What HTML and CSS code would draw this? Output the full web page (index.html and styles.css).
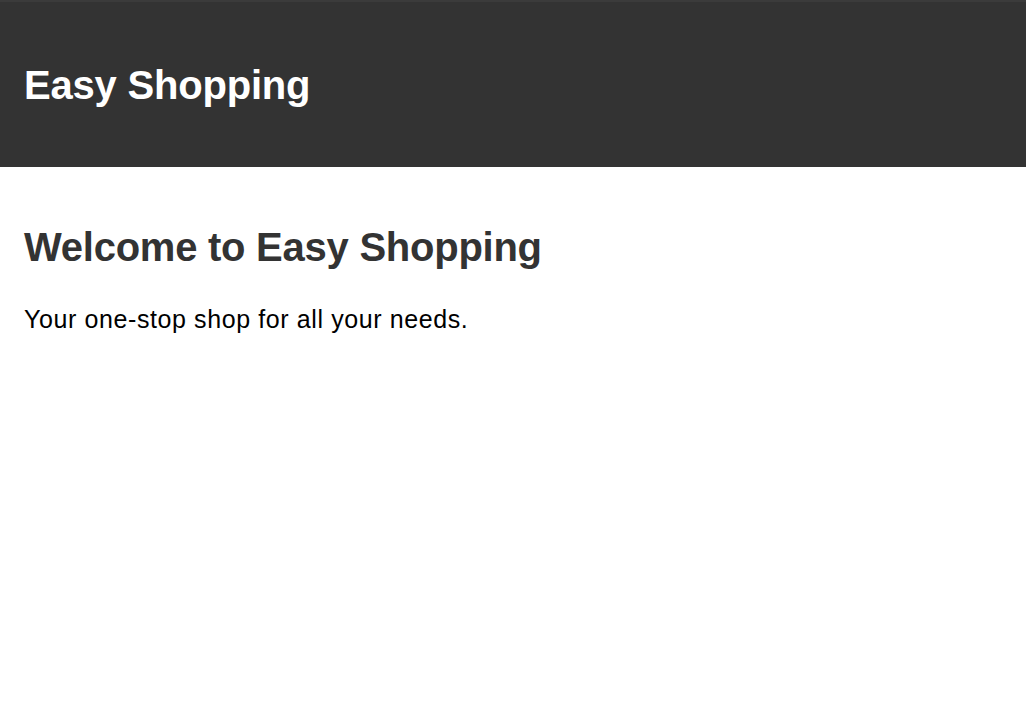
FILE: index.html
```html
<!DOCTYPE html>
<html lang="en">
<head>
<meta charset="utf-8">
<title>Easy Shopping</title>
<link rel="stylesheet" href="styles.css">
</head>
<body>
<header class="site-header">
  <h1 class="site-title">Easy Shopping</h1>
</header>
<main class="content">
  <h2 class="welcome">Welcome to Easy Shopping</h2>
  <p class="tagline">Your one-stop shop for all your needs.</p>
</main>
</body>
</html>
```
FILE: styles.css
```css
html, body {
  margin: 0;
  padding: 0;
  background: #ffffff;
  font-family: "Liberation Sans", Arial, sans-serif;
}
.site-header {
  background: #333333;
  color: #ffffff;
  padding: 60px 24px 59px;
  border-top: 2px solid #3b3b3b;
}
.site-title {
  margin: 0;
  font-size: 40px;
  font-weight: bold;
  line-height: 46px;
  letter-spacing: -0.2px;
}
.content {
  padding: 0 24px;
}
.welcome {
  margin: 57px 0 0;
  font-size: 40px;
  font-weight: bold;
  line-height: 46px;
  letter-spacing: -0.25px;
  color: #333333;
}
.tagline {
  margin: 35px 0 0;
  font-size: 25px;
  line-height: 29px;
  letter-spacing: 0.6px;
  color: #000000;
}
```
